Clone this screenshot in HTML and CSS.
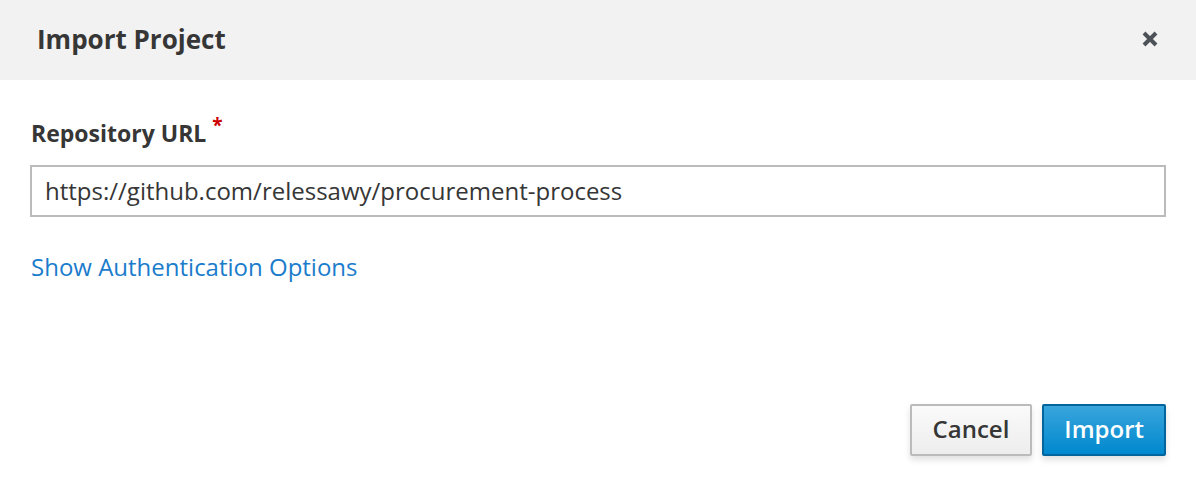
FILE: index.html
```html
<!DOCTYPE html>
<html>
<head>
<meta charset="utf-8">
<link rel="stylesheet" href="styles.css">
</head>
<body>
<div class="modal">
  <div class="modal-header">
    <h1 class="modal-title">Import Project</h1>
    <button class="close" aria-label="Close">
      <svg width="16" height="16" viewBox="0 0 16 16"><path d="M2 2 L14 14 M14 2 L2 14" stroke="#4d5258" stroke-width="4" stroke-linecap="butt"/></svg>
    </button>
  </div>
  <div class="modal-body">
    <label class="field-label">Repository URL<span class="required">*</span></label>
    <input class="text-input" type="text" value="https://github.com/relessawy/procurement-process">
    <a class="link" href="#">Show Authentication Options</a>
  </div>
  <div class="modal-footer">
    <button class="btn btn-default">Cancel</button>
    <button class="btn btn-primary">Import</button>
  </div>
</div>
</body>
</html>
```
FILE: styles.css
```css
html, body {
  margin: 0;
  padding: 0;
  background: #fff;
  font-family: "Open Sans", "Noto Sans", sans-serif;
  color: #363636;
}
.modal {
  width: 1196px;
  height: 486px;
  display: flex;
  flex-direction: column;
}
.modal-header {
  height: 80px;
  box-sizing: border-box;
  background: #f2f2f2;
  display: flex;
  align-items: center;
  justify-content: space-between;
  padding: 0 38px 2px 37px;
}
.modal-title {
  margin: 0;
  font-size: 26px;
  font-weight: 700;
  color: #363636;
}
.close {
  border: 0;
  background: none;
  padding: 0;
  width: 16px;
  height: 16px;
  display: flex;
}
.modal-body {
  padding: 36px 30px 0 30px;
  display: flex;
  flex-direction: column;
  align-items: flex-start;
  flex: 1;
}
.field-label {
  font-size: 23px;
  font-weight: 700;
  padding-left: 1px;
  line-height: 34px;
}
.required {
  color: #c00;
  font-size: 19px;
  position: relative;
  top: -10px;
  margin-left: 6px;
  font-weight: 700;
}
.text-input {
  margin-top: 13px;
  width: 100%;
  box-sizing: border-box;
  height: 52px;
  border: 2px solid #bbb;
  padding: 0 13px 1px;
  font-family: "Open Sans", sans-serif;
  font-size: 24px;
  color: #363636;
  outline: none;
}
.link {
  margin-top: 33px;
  padding-left: 1px;
  font-size: 24px;
  color: #1b7ccc;
  text-decoration: none;
}
.modal-footer {
  display: flex;
  justify-content: flex-end;
  gap: 10px;
  padding: 0 30px 30px 0;
}
.btn {
  height: 52px;
  font-family: "Open Sans", sans-serif;
  font-size: 24px;
  font-weight: 600;
  padding: 0 21px 3px;
  border-radius: 2px;
  box-shadow: 0 4px 6px rgba(0,0,0,0.12);
}
.btn-default {
  background: linear-gradient(#fafafa, #ededed);
  border: 2px solid #bbb;
  color: #363636;
}
.btn-primary {
  padding: 0 20px 3px;
  background: linear-gradient(#39a5dc, #0088ce);
  border: 2px solid #00659c;
  color: #fff;
}
```
